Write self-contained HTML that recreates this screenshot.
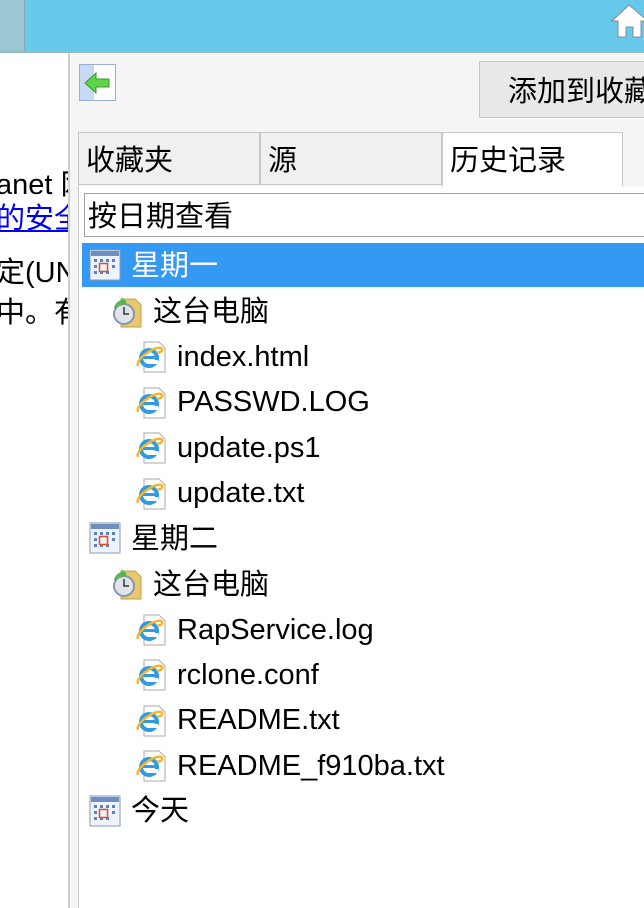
<!DOCTYPE html>
<html><head><meta charset="utf-8"><style>
*{margin:0;padding:0;box-sizing:border-box}
body{width:644px;height:908px;overflow:hidden;background:#fff;font-family:"Liberation Sans","Noto Sans CJK SC",sans-serif;position:relative}
.a{position:absolute}
.t{font-size:29px;color:#000;white-space:nowrap;line-height:32px}
</style></head><body>
<div class="a" style="left:0;top:0;width:644px;height:52px;background:#66c9e9"></div>
<div class="a" style="left:0;top:0;width:25px;height:52px;background:#9bc6d4;border-right:1px solid #8ab"></div>
<div class="a" style="left:0;top:51px;width:644px;height:2px;background:#9ab8c4"></div>
<svg class="a" style="left:610px;top:3px" width="40" height="36" viewBox="0 0 40 36"><path d="M19 2 L2 18 H8 V34 H16 V24 H23 V34 H31 V18 H38 Z" fill="#fff" stroke="#889" stroke-width="1"/></svg>
<div class="a t" style="left:-4px;top:169px">anet 网</div>
<div class="a t" style="left:-4px;top:203px;color:#00e;text-decoration:underline">的安全</div>
<div class="a t" style="left:-4px;top:257px">定(UN</div>
<div class="a t" style="left:-4px;top:297px">中。有</div>
<div class="a" style="left:68px;top:53px;width:576px;height:855px;background:#f5f5f5;border-left:2px solid #d0d0d0"></div>
<div class="a" style="left:79px;top:64px;width:37px;height:37px;background:#fff;border:1px solid #9ab0d0"><div style="position:absolute;left:0;top:0;width:14px;height:35px;background:#c6daf5"></div>
<svg class="a" style="left:3px;top:6px" width="30" height="24"><path d="M2 12 L13 2 V8 H26 V16 H13 V22 Z" fill="#5fd34a" stroke="#3a9a2a"/></svg></div>
<div class="a" style="left:479px;top:61px;width:170px;height:57px;background:#e8e8e8;border:1px solid #c6c6c6"></div>
<div class="a t" style="left:508px;top:76px">添加到收藏</div>
<div class="a" style="left:78px;top:132px;width:182px;height:53px;background:#f0f0f0;border:1px solid #c8c8c8"></div>
<div class="a" style="left:260px;top:132px;width:182px;height:53px;background:#f0f0f0;border:1px solid #c8c8c8"></div>
<div class="a" style="left:442px;top:132px;width:181px;height:56px;background:#fff;border:1px solid #c8c8c8;border-bottom:none"></div>
<div class="a t" style="left:86px;top:145px">收藏夹</div>
<div class="a t" style="left:268px;top:145px">源</div>
<div class="a t" style="left:450px;top:145px">历史记录</div>
<div class="a" style="left:78px;top:186px;width:566px;height:722px;background:#fff;border-left:1px solid #c8c8c8"></div>
<div class="a" style="left:84px;top:193px;width:570px;height:44px;border:1px solid #a0a0a0;background:#fff"></div>
<div class="a t" style="left:88px;top:201px">按日期查看</div>
<div class="a" style="left:82px;top:243px;width:562px;height:44px;background:#3399f3"></div>

<svg width="0" height="0" style="position:absolute"><defs>
<g id="cal"><rect x="1" y="1" width="30" height="30" fill="#eef3fb" stroke="#8a9ab0"/><rect x="2" y="2" width="28" height="5" fill="#6f8fc0"/>
<g fill="#5a80c8"><rect x="5" y="10" width="3" height="3"/><rect x="11" y="10" width="3" height="3"/><rect x="17" y="10" width="3" height="3"/><rect x="23" y="10" width="3" height="3"/><rect x="5" y="16" width="3" height="3"/><rect x="23" y="16" width="3" height="3"/><rect x="5" y="22" width="3" height="3"/><rect x="11" y="22" width="3" height="3"/><rect x="17" y="22" width="3" height="3"/></g><rect x="10.5" y="14.5" width="8" height="8" fill="none" stroke="#e05020" stroke-width="1.5"/></g>
<g id="pc"><path d="M10 3 h14 l6 6 v22 h-20z" fill="#e8c870" stroke="#c8a040"/><circle cx="13" cy="18" r="10" fill="#dfe4ea" stroke="#8a96a5" stroke-width="2"/><path d="M13 11 v7 h5" stroke="#334" stroke-width="1.5" fill="none"/><path d="M3 12 a10 10 0 0 1 8-8 l-1 -3 l6 5 l-6 4 l0 -3 a8 8 0 0 0 -5 6z" fill="#4cb848"/></g>
<g id="ie"><path d="M9 2 h15 l6 6 v24 h-21z" fill="#fff" stroke="#aaa"/><circle cx="14" cy="18" r="10" fill="#2f9be0"/><circle cx="14" cy="18" r="6" fill="#fff"/><rect x="8" y="16" width="13" height="3" fill="#2f9be0"/><rect x="14" y="20" width="9" height="4" fill="#fff"/><path d="M3 26 C0 20 18 6 26 8 C30 10 24 14 22 12" fill="none" stroke="#f5b52c" stroke-width="2.5"/></g>
</defs></svg>

<svg class="a" style="left:89px;top:249px" width="32" height="32"><use href="#cal"/></svg>
<div class="a t" style="left:131px;top:250px;color:#fff">星期一</div>
<svg class="a" style="left:111px;top:296px" width="34" height="34"><use href="#pc"/></svg>
<div class="a t" style="left:153px;top:296px">这台电脑</div>
<svg class="a" style="left:135px;top:340px" width="32" height="34"><use href="#ie"/></svg>
<div class="a t" style="left:177px;top:341px">index.html</div>
<svg class="a" style="left:135px;top:386px" width="32" height="34"><use href="#ie"/></svg>
<div class="a t" style="left:177px;top:386px">PASSWD.LOG</div>
<svg class="a" style="left:135px;top:431px" width="32" height="34"><use href="#ie"/></svg>
<div class="a t" style="left:177px;top:432px">update.ps1</div>
<svg class="a" style="left:135px;top:477px" width="32" height="34"><use href="#ie"/></svg>
<div class="a t" style="left:177px;top:477px">update.txt</div>
<svg class="a" style="left:89px;top:522px" width="32" height="32"><use href="#cal"/></svg>
<div class="a t" style="left:131px;top:523px">星期二</div>
<svg class="a" style="left:111px;top:568px" width="34" height="34"><use href="#pc"/></svg>
<div class="a t" style="left:153px;top:569px">这台电脑</div>
<svg class="a" style="left:135px;top:613px" width="32" height="34"><use href="#ie"/></svg>
<div class="a t" style="left:177px;top:614px">RapService.log</div>
<svg class="a" style="left:135px;top:658px" width="32" height="34"><use href="#ie"/></svg>
<div class="a t" style="left:177px;top:659px">rclone.conf</div>
<svg class="a" style="left:135px;top:704px" width="32" height="34"><use href="#ie"/></svg>
<div class="a t" style="left:177px;top:704px">README.txt</div>
<svg class="a" style="left:135px;top:749px" width="32" height="34"><use href="#ie"/></svg>
<div class="a t" style="left:177px;top:750px">README_f910ba.txt</div>
<svg class="a" style="left:89px;top:795px" width="32" height="32"><use href="#cal"/></svg>
<div class="a t" style="left:131px;top:795px">今天</div>
</body></html>
